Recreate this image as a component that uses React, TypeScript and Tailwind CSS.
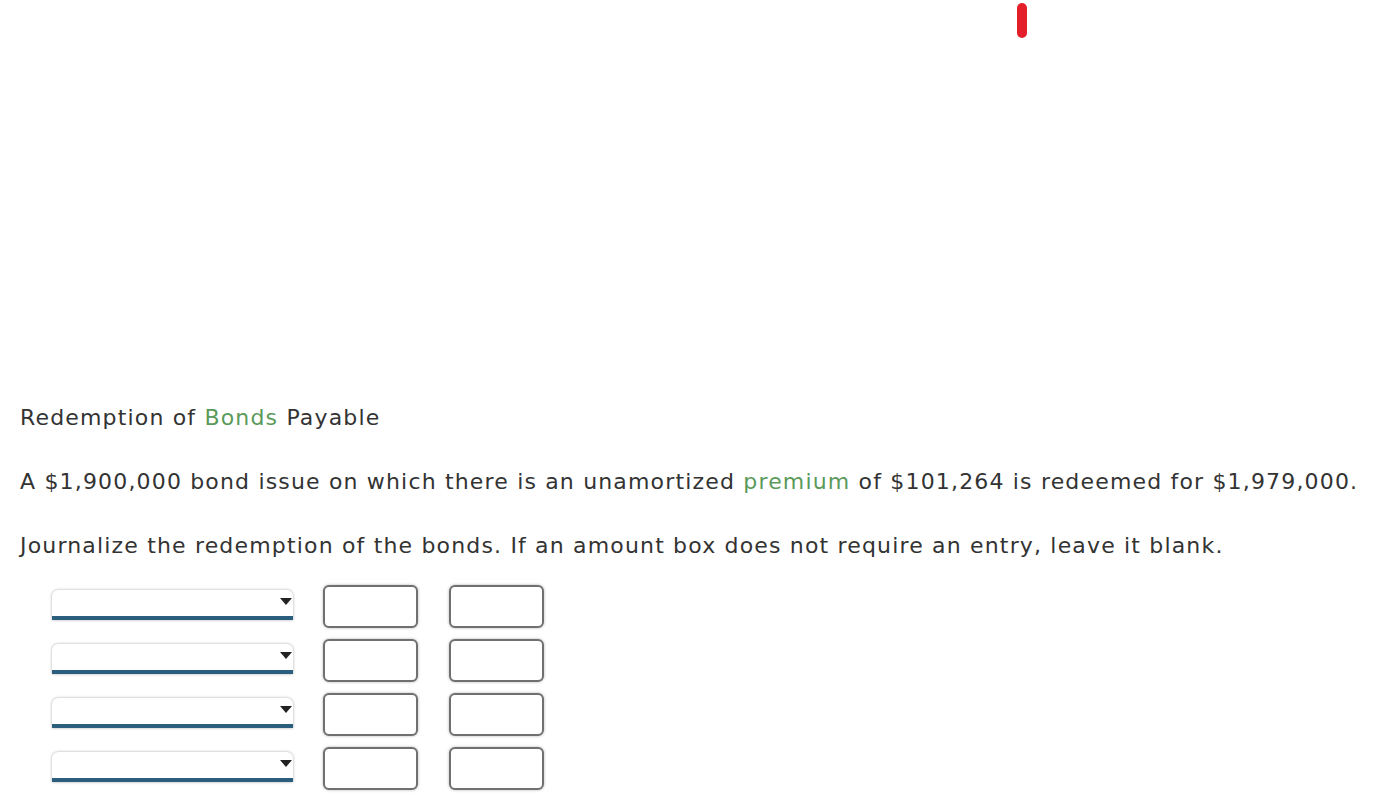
import React from "react";

const Select = () => (
  <div className="relative h-[30px] w-[241px] rounded-t-[6px] border-b-4 border-[#2a5e7c] bg-white shadow-[0_0_3px_rgba(0,0,0,0.35)]">
    <span className="absolute right-[1px] top-[8px] h-0 w-0 border-x-[6px] border-t-[7px] border-x-transparent border-t-[#222]" />
  </div>
);

const Amount = () => (
  <input
    type="text"
    className="h-[43px] w-[95px] rounded-[6px] border-2 border-[#707070] bg-white shadow-[0_0_3px_rgba(0,0,0,0.3)] outline-none"
  />
);

export default function App() {
  const rows = [0, 1, 2, 3];
  return (
    <div
      className="min-h-screen w-full bg-white text-[#333]"
      style={{ fontFamily: '"DejaVu Sans", Verdana, sans-serif' }}
    >
      <div className="flex justify-center pl-[671px] pt-[3px]">
        <div className="h-[35px] w-[10px] rounded-full bg-[#e3202a]" />
      </div>

      <div className="whitespace-nowrap px-[20px] pt-[365px] text-[22px] leading-[30px] tracking-[1.17px]">
        <p>
          Redemption of <span className="text-[#5a9a5a]">Bonds</span> Payable
        </p>
        <p className="mt-[34px]">
          A $1,900,000 bond issue on which there is an unamortized{" "}
          <span className="text-[#5a9a5a]">premium</span> of $101,264 is redeemed for $1,979,000.
        </p>
        <p className="mt-[34px]">
          Journalize the redemption of the bonds. If an amount box does not require an entry, leave it blank.
        </p>
      </div>

      <div className="mt-[24px] flex flex-col gap-[11px] pl-[52px]">
        {rows.map((r) => (
          <div key={r} className="flex items-start">
            <div className="mt-[5px]">
              <Select />
            </div>
            <div className="ml-[30px]">
              <Amount />
            </div>
            <div className="ml-[31px]">
              <Amount />
            </div>
          </div>
        ))}
      </div>
    </div>
  );
}
